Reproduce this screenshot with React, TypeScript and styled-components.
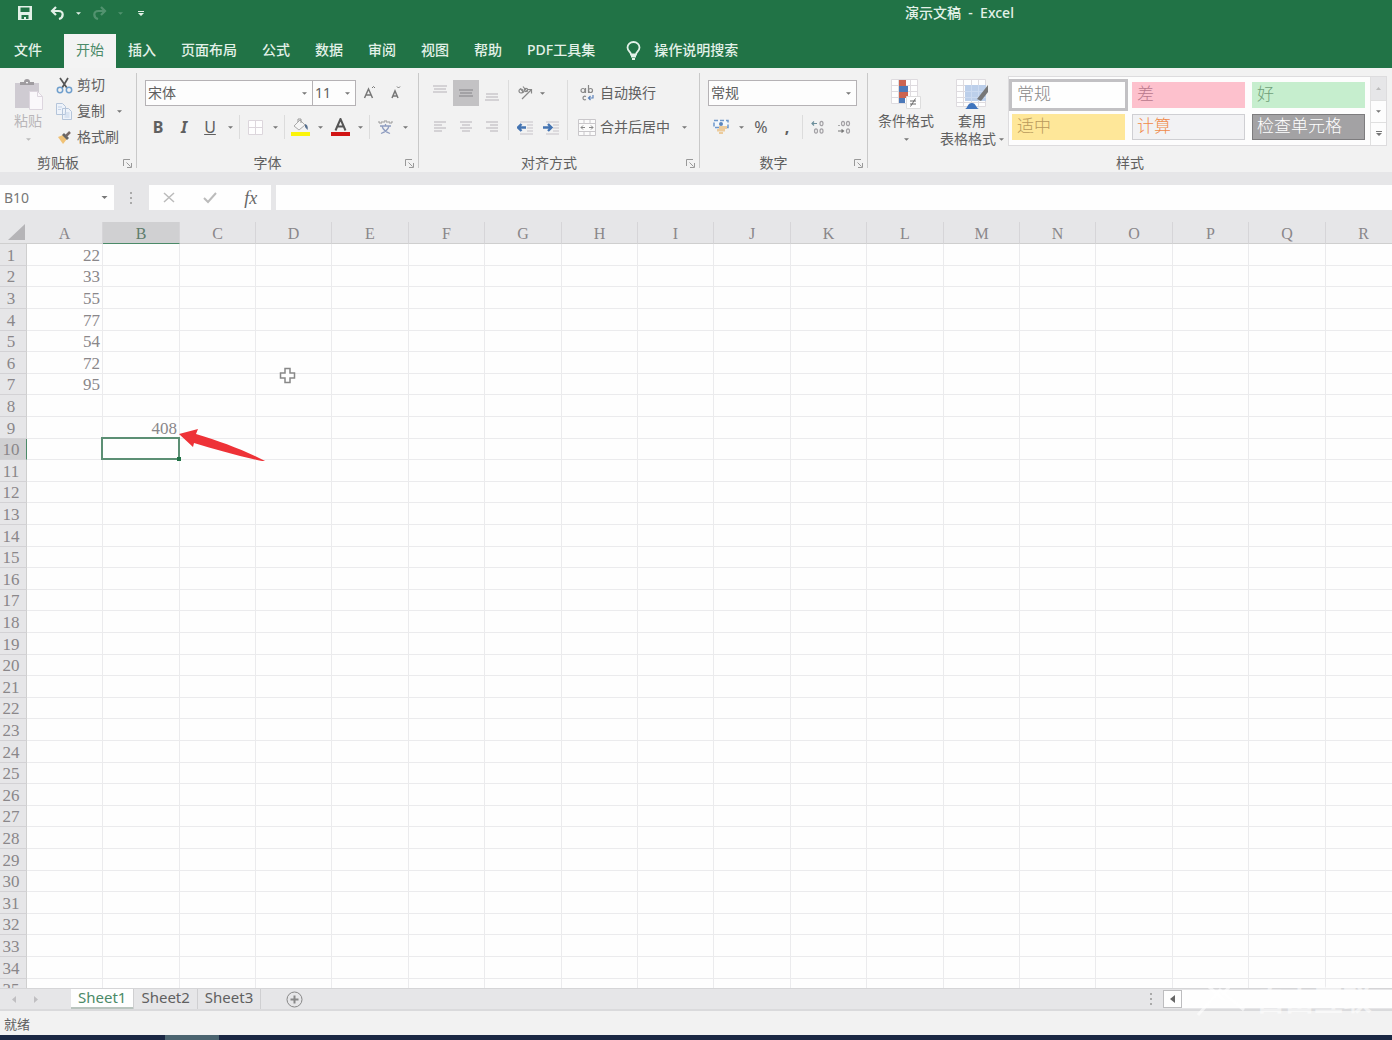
import React from 'react';
import styled, { createGlobalStyle, css } from 'styled-components';

const UI = `'Noto Sans', 'Noto Sans CJK SC', sans-serif`;
const SERIF = `'Liberation Serif', 'Noto Sans CJK SC', serif`;

const GlobalStyle = createGlobalStyle`
  *, *::before, *::after { box-sizing: border-box; }
  body { margin: 0; background: #fff; color: #606060; font: 14px/18px ${UI}; }
  button, input, select { font: inherit; color: inherit; margin: 0; padding: 0; border: 0; background: none; border-radius: 0; }
  svg { display: block; flex: none; }
`;

const Window = styled.div`
  display: flex;
  flex-direction: column;
  height: 100vh;
  overflow: hidden;
`;

/* ---------- title bar and tabs ---------- */
const TitleBar = styled.header`
  display: grid;
  grid-template-columns: 1fr auto 1fr;
  align-items: center;
  height: 34px;
  padding-bottom: 8px;
  background: #217346;
  color: #e3f1e8;
`;
const QuickAccess = styled.div`
  display: flex;
  align-items: center;
  padding-left: 10px;
`;
const QuickButton = styled.button<{ $w: number; $dim?: boolean }>`
  display: grid;
  place-items: center;
  width: ${p => p.$w}px;
  height: 24px;
  opacity: ${p => (p.$dim ? 0.25 : 1)};
`;
const Title = styled.h1`
  margin: 0;
  padding-left: 527px;
  grid-column: 2;
  font-size: 14px;
  line-height: 18px;
  font-weight: 500;
  white-space: pre;
`;
const TabBar = styled.nav`
  display: flex;
  height: 34px;
  padding-left: 2px;
  background: #217346;
`;
const Tab = styled.button<{ $active?: boolean; $search?: boolean }>`
  display: flex;
  align-items: center;
  gap: 13px;
  padding: 0 13px 2px 12px;
  padding-left: ${p => (p.$search ? 18 : 12)}px;
  font-weight: 500;
  color: #e3f1e8;
  ${p => p.$active && css`
    margin-left: 9px;
    padding: 0 12px 2px;
    font-weight: 400;
    background: #f3f3f3;
    color: #4b8a68;
  `}
`;

/* ---------- ribbon ---------- */
const Ribbon = styled.section`
  display: flex;
  height: 104px;
  background: #f2f2f2;
`;
const Group = styled.div<{ $w?: number }>`
  display: flex;
  flex-direction: column;
  ${p => (p.$w ? `flex: none; width: ${p.$w}px;` : 'flex: 1; min-width: 0;')}
`;
const GroupRule = styled.div`
  flex: none;
  width: 1px;
  margin: 5px 0 4px;
  background: #c9c9c9;
`;
const GroupBody = styled.div<{ $top?: number }>`
  flex: 1;
  display: flex;
  align-items: flex-start;
  padding: ${p => p.$top ?? 12}px 0 0 8px;
`;
const GroupFoot = styled.div`
  display: grid;
  grid-template-columns: 1fr auto;
  align-items: center;
  justify-items: center;
  height: 18px;
`;
const Launcher = styled.button`
  display: grid;
  place-items: center;
  width: 18px;
  height: 18px;
  margin-left: 2px;
`;
const Stack = styled.div<{ $gap?: number; $indent?: number }>`
  display: flex;
  flex-direction: column;
  gap: ${p => p.$gap ?? 8}px;
  padding-left: ${p => p.$indent ?? 0}px;
`;
const Line = styled.div`
  display: flex;
  align-items: center;
  height: 26px;
`;
const Tool = styled.button<{ $w?: number; $on?: boolean }>`
  display: grid;
  place-items: center;
  flex: none;
  width: ${p => p.$w ?? 26}px;
  height: 26px;
  font-size: 16px;
  background: ${p => (p.$on ? '#c3c2c4' : 'transparent')};
`;
const WideTool = styled.button`
  display: flex;
  align-items: center;
  gap: 4px;
  height: 26px;
  padding-left: 5px;
  white-space: nowrap;
`;
const BigTool = styled.button<{ $w: number; $dim?: boolean }>`
  display: flex;
  flex-direction: column;
  align-items: center;
  flex: none;
  width: ${p => p.$w}px;
  padding-top: ${p => (p.$dim ? 4 : 0)}px;
  color: ${p => (p.$dim ? '#b9b6b9' : 'inherit')};
  white-space: nowrap;
`;
const BigIcon = styled.span`
  display: grid;
  place-items: center;
  height: 36px;
`;
const BigLine = styled.span`
  display: flex;
  align-items: center;
  gap: 3px;
  height: 18px;
`;
const Rule = styled.div<{ $tall?: boolean }>`
  flex: none;
  width: 1px;
  height: ${p => (p.$tall ? 60 : 24)}px;
  margin: 0 ${p => (p.$tall ? 3 : 2)}px;
  background: #dcdcdc;
`;
const SelectBox = styled.label<{ $w: number }>`
  display: grid;
  grid-template-columns: 1fr 16px;
  align-items: center;
  width: ${p => p.$w}px;
  height: 26px;
  border: 1px solid #b5b2b5;
  background: #fdfdfd;
  & + & { border-left: 0; }
  select {
    grid-area: 1 / 1 / 2 / 3;
    appearance: none;
    height: 24px;
    padding-left: 2px;
    outline: 0;
  }
  svg { grid-area: 1 / 2; justify-self: center; pointer-events: none; }
`;

/* ---------- style gallery ---------- */
const Gallery = styled.div`
  display: flex;
  height: 70px;
  border: 1px solid #dddcde;
  background: #fdfdfd;
`;
const Swatches = styled.div`
  display: grid;
  grid-template-columns: repeat(3, 113px);
  grid-auto-rows: 26px;
  gap: 6px 7px;
  padding: 5px 5px 5px 3px;
`;
const Swatch = styled.button<{ $bg: string; $fg: string; $edge?: string; $picked?: boolean }>`
  padding: 0 4px 1px;
  border: 1px solid ${p => p.$edge ?? p.$bg};
  background: ${p => p.$bg};
  color: ${p => p.$fg};
  font: 300 17px/22px ${SERIF};
  text-align: left;
  ${p => p.$picked && css`box-shadow: 0 0 0 3px #c2c1c4;`}
`;
const GalleryNav = styled.div`
  display: grid;
  grid-template-rows: 1fr 1fr 1fr;
  width: 16px;
  border-left: 1px solid #e0e0e0;
`;
const NavButton = styled.button<{ $off?: boolean }>`
  display: grid;
  place-items: center;
  background: ${p => (p.$off ? '#e6e6e8' : 'transparent')};
  & + & { border-top: 1px solid #e0e0e0; }
`;

/* ---------- formula bar ---------- */
const FormulaBar = styled.div`
  display: flex;
  flex: none;
  align-items: flex-start;
  height: 50px;
  padding-top: 13px;
  background: #e6e6e8;
`;
const NameBox = styled.label`
  display: flex;
  align-items: center;
  width: 114px;
  height: 25px;
  padding-right: 6px;
  background: #fefefe;
  input { flex: 1; min-width: 0; padding-left: 4px; color: #777; }
`;
const Grip = styled.div`
  display: grid;
  place-items: center;
  width: 35px;
  height: 25px;
`;
const FormulaTools = styled.div`
  display: flex;
  width: 122px;
  height: 25px;
  margin-right: 5px;
  background: #fefefe;
`;
const FormulaTool = styled.button`
  display: grid;
  place-items: center;
  flex: 1;
  font: italic 18px/20px ${SERIF};
  color: #666;
`;
const FormulaInput = styled.input`
  flex: 1;
  min-width: 0;
  height: 25px;
  padding-left: 6px;
  background: #fefefe;
`;

/* ---------- sheet ---------- */
const SheetArea = styled.main`
  position: relative;
  flex: 1;
  min-height: 0;
  overflow: hidden;
  background: #fefefe;
`;
const Grid = styled.table`
  table-layout: fixed;
  width: 0;
  border-collapse: separate;
  border-spacing: 0;
  color: #8a878a;
  font: 17px/18px ${SERIF};
`;
const Col = styled.col<{ $w: number }>`
  width: ${p => p.$w}px;
`;
const Corner = styled.td`
  padding: 0 2px 1px 0;
  border-bottom: 1px solid #cfcfcf;
  background: #e6e6e8;
  svg { margin-left: auto; }
`;
const ColHead = styled.th<{ $on?: boolean }>`
  height: 22px;
  padding: 3px 0 0;
  border-right: 1px solid #d6d5d8;
  border-bottom: 1px solid #cfcfcf;
  background: #e6e6e8;
  font-size: 16px;
  font-weight: 400;
  ${p => p.$on && css`background: #d0d0d2; color: #5f7d6c; border-bottom-color: #4b8a68;`}
`;
const Row = styled.tr`
  height: 22px;
  &:nth-child(5n + 2), &:nth-child(5n + 5) { height: 21px; }
`;
const RowHead = styled.th<{ $on?: boolean }>`
  padding: 2px 4px 0 0;
  border-right: 1px solid #cfcfcf;
  border-bottom: 1px solid #d3d2d5;
  background: #e6e6e8;
  font-weight: 400;
  ${p => p.$on && css`background: #d0d0d2; border-right-color: #4b8a68;`}
`;
const Cell = styled.td<{ $on?: boolean }>`
  padding: 2px 2px 0 0;
  border-right: 1px solid #ebebed;
  border-bottom: 1px solid #ebebed;
  text-align: right;
  ${p => p.$on && css`
    position: relative;
    &::before { content: ''; position: absolute; inset: -2px -1px -1px -2px; border: 2px solid #5c8f74; }
    &::after { content: ''; position: absolute; right: -2px; bottom: -2px; width: 4px; height: 4px; background: #217346; }
  `}
`;
const Pin = styled.svg<{ $x: number; $y: number }>`
  position: absolute;
  left: ${p => p.$x}px;
  top: ${p => p.$y}px;
  pointer-events: none;
`;

/* ---------- bottom bars ---------- */
const SheetTabs = styled.div`
  display: flex;
  flex: none;
  align-items: flex-start;
  height: 23px;
  padding-left: 3px;
  border-top: 1px solid #d5d5d7;
  border-bottom: 2px solid #dadadc;
  background: #e6e6e8;
`;
const SheetNav = styled.button`
  display: grid;
  place-items: center;
  width: 22px;
  height: 20px;
`;
const SheetList = styled.div`
  display: flex;
  margin-left: 24px;
`;
const SheetTab = styled.button<{ $on?: boolean }>`
  height: 20px;
  padding: 0 7px 3px;
  border-right: 1px solid #cfcfd1;
  font-size: 15px;
  line-height: 17px;
  ${p => p.$on && css`background: #fefefe; color: #4b8a68; box-shadow: inset 0 -2px #b9c4be;`}
`;
const AddSheet = styled.button`
  display: grid;
  place-items: center;
  width: 66px;
  height: 20px;
`;
const ScrollZone = styled.div`
  display: flex;
  align-items: center;
  width: 242px;
  height: 20px;
  margin-left: auto;
`;
const ScrollButton = styled.button`
  display: grid;
  place-items: center;
  width: 19px;
  height: 18px;
  margin-left: 10px;
  border: 1px solid #bdbdbf;
  background: #fefefe;
`;
const ScrollThumb = styled.div`
  flex: 1;
  height: 18px;
  background: #fefefe;
`;
const StatusBar = styled.footer`
  flex: none;
  height: 24px;
  padding: 4px 4px 0;
  background: #f2f2f2;
  font-size: 13px;
`;
const Taskbar = styled.div`
  display: flex;
  flex: none;
  height: 5px;
  padding-left: 165px;
  background: #1b2844;
`;
const TaskItem = styled.div`
  width: 54px;
  background: #4b6470;
`;
const Watermark = styled.div`
  position: absolute;
  right: 20px;
  bottom: 22px;
  display: flex;
  align-items: center;
  gap: 10px;
  color: rgba(255, 255, 255, 0.6);
  font-size: 29px;
  line-height: 34px;
  font-weight: 700;
  pointer-events: none;
`;

/* ---------- icons ---------- */
const Caret = ({ color = '#777', s = 5 }: { color?: string; s?: number }) => (
  <svg width={s} height="3" viewBox="0 0 6 3" fill={color}><path d="M0 0h6L3 3z" /></svg>
);
const SplitCaret = ({ label, w = 14 }: { label: string; w?: number }) => (
  <Tool $w={w} aria-label={label}><Caret /></Tool>
);
const LaunchIcon = () => (
  <svg width="9" height="9" fill="none" stroke="#999"><path d="M.5 7V.5H7M3.500 3.500l4 4M8.500 4v4.500H4" /></svg>
);
const SaveIcon = () => (
  <svg width="14" height="14"><path fill="#e3f1e8" fillRule="evenodd" d="M0 0h14v14H0zM2.500 1.500v4.500h9V1.500zM3.500 9v4H6v-2h2v2h2.500V9z" /></svg>
);
const UndoIcon = ({ flip }: { flip?: boolean }) => (
  <svg width="15" height="14" viewBox="0 0 15 14" fill="none" stroke="#e3f1e8" strokeWidth="2.200">
    <g transform={flip ? 'matrix(-1 0 0 1 15 0)' : undefined}><path d="M6 1L2 5l4 4M2 5h6.500c5.500 0 5.500 6.500 .500 8" /></g>
  </svg>
);
const BulbIcon = () => (
  <svg width="15" height="19" viewBox="0 0 15 19" fill="none" stroke="#e3f1e8" strokeWidth="1.800">
    <path d="M5 13.500c0-2.500-3.500-3.500-3.500-7a6 5.500 0 0 1 12 0c0 3.500-3.500 4.500-3.500 7zM5 15.500h5M6 18h3" />
  </svg>
);
const PasteIcon = () => (
  <svg width="29" height="31" viewBox="0 0 29 31">
    <path fill="#cfcbd2" d="M1 4h24v25H1z" /><path fill="#9f9ca0" fillRule="evenodd" d="M6 6V3h4a3 3 0 0 1 6 0h4v3zM12 3h2v1.500h-2z" />
    <path fill="#faf8fb" stroke="#ddd6df" d="M15.500 12.500h8l5 5v13h-13z" /><path fill="none" stroke="#ddd6df" d="M23.500 12.500v5h5" />
  </svg>
);
const CutIcon = () => (
  <svg width="17" height="17" viewBox="0 0 17 17" fill="none">
    <path stroke="#555" strokeWidth="1.700" d="M4 1l7 10M12 1L6 11" />
    <circle cx="4" cy="13" r="2.700" stroke="#6f9fcd" strokeWidth="1.500" /><circle cx="13" cy="13" r="2.700" stroke="#6f9fcd" strokeWidth="1.500" />
  </svg>
);
const CopyIcon = () => (
  <svg width="17" height="17" viewBox="0 0 17 17" fill="#eef3fa" stroke="#b5c5da">
    <path d="M.5.5h6l3 3v8h-9zM6.500 5.500h6l3 3v8h-9z" /><path d="M2 4h4M2 6.500h3M8.500 10h5M8.500 12h5M8.500 14h5" stroke="#c3d3e8" />
  </svg>
);
const BrushIcon = () => (
  <svg width="17" height="17" viewBox="0 0 17 17">
    <path fill="#f0c277" d="M2 8l5-2 4 4-4 5z" /><path fill="#666" d="M6 6l2-2 5 5-2 2z" /><path stroke="#776a66" strokeWidth="2.500" d="M10 7l4-4" />
  </svg>
);
const GrowIcon = ({ small }: { small?: boolean }) => (
  <svg width="14" height="15" viewBox="0 0 14 15" fill="none" stroke="#777" strokeWidth="1.500">
    <path d={small ? 'M4 12l3-7 3 7M5 10h4' : 'M2.500 12L6.500 3l4 9M4 9h5'} />
    <path strokeWidth="1" d={small ? 'M9 .5L10.500 2 12 .5' : 'M10 2L11.500.5 13 2'} />
  </svg>
);
const BorderIcon = () => (
  <svg width="15" height="15" fill="#fefefe" stroke="#dcd6dc"><path d="M.5.5h14v14H.5zM7.500 1v13M1 7.500h13" /></svg>
);
const FillIcon = () => (
  <svg width="19" height="18" viewBox="0 0 19 18">
    <path fill="#f5f5f5" stroke="#aaa" d="M3 8l6-6 5 5-6 5z" /><path stroke="#999" fill="none" d="M7 4V1h3v4" />
    <path fill="#556f8f" d="M14 6c3 1 3 4 2.500 6L14 9z" /><path fill="#fbf40a" d="M0 14h19v4H0z" />
  </svg>
);
const FontColorIcon = () => (
  <svg width="19" height="18" viewBox="0 0 19 18">
    <path fill="none" stroke="#555" strokeWidth="2" d="M4.500 12.500l5-11.500 5 11.500M6.500 8.500h6" /><path fill="#d11515" d="M0 14h19v4H0z" />
  </svg>
);
const PhoneticIcon = () => (
  <svg width="15" height="16" viewBox="0 0 15 16" fill="none">
    <path stroke="#999" d="M1 4V2M1 4h3V2M6 4V2h3v2M11 2v2h3V2" /><path stroke="#8f9dc0" strokeWidth="1.300" d="M2 7h11M7.500 5v2M4 7c1 4 4 6 8 7.500M11 7c-1 4-4 6-8 7.500" />
  </svg>
);
const Bars = ({ rows, dark }: { rows: [number, number, number][]; dark?: boolean }) => (
  <svg width="14" height="16" fill={dark ? '#a3a2a5' : '#d4d2d5'}>
    {rows.map(([x, y, w]) => <rect key={y} x={x} y={y} width={w} height="2" />)}
  </svg>
);
const OrientIcon = () => (
  <svg width="16" height="16" viewBox="0 0 16 16" fill="none" stroke="#888" strokeWidth="1.200">
    <path d="M5 14l9-9M10.500 4.500H14.500V8.500" /><circle cx="4" cy="6" r="2" /><path d="M3 3.500l4 4M6 1.500l4 5" /><circle cx="9" cy="5" r="1.700" />
  </svg>
);
const IndentIcon = ({ right }: { right?: boolean }) => (
  <svg width="17" height="15" viewBox="0 0 17 15">
    <path fill="#dcdadd" d="M3 1h13v2H3zM10 4h6v2h-6zM10 7h6v2h-6zM10 10h6v2h-6zM3 13h13v2H3z" />
    <path fill="none" stroke="#4474b2" strokeWidth="2.400" d={right ? 'M0 7.500h8M5 4l3.500 3.500L5 11' : 'M9 7.500H1M4.500 4L1 7.500 4.500 11'} />
  </svg>
);
const WrapIcon = () => (
  <svg width="18" height="17" viewBox="0 0 18 17" fill="none" stroke="#888" strokeWidth="1.200">
    <circle cx="5" cy="5.500" r="2" /><path d="M7.500 3v5M10.500 0v8" /><circle cx="12.500" cy="5.500" r="2" />
    <path d="M8 11.500c-4-2-4 5 0 3" /><path stroke="#5b82ba" d="M15 10v3h-4M12.500 11l-2 2 2 2" />
  </svg>
);
const MergeIcon = () => (
  <svg width="18" height="17" viewBox="0 0 18 17" fill="none" stroke="#c9c7ca">
    <path fill="#fbfbfb" d="M.5.5h17v16H.5zM.5 4.500h17M.5 12.500h17M6 .5v4M12 .5v4M6 12.500v4M12 12.500v4" /><path stroke="#888" d="M3 8.500h4M11 8.500h4M5 6.500l-2 2 2 2M13 6.500l2 2-2 2" />
  </svg>
);
const MoneyIcon = () => (
  <svg width="17" height="16" viewBox="0 0 17 16">
    <path fill="#f4f8fc" stroke="#6f98cb" strokeWidth="1.500" strokeDasharray="4 2" d="M1 1.500h14v7H1z" /><circle cx="8" cy="5" r="2" fill="#5b86bd" />
    <path fill="#eccb9c" d="M6 7h8v3H6zM4 10h8v2.500H4zM6 13h4v2H6z" />
  </svg>
);
const DecimalIcon = ({ less }: { less?: boolean }) => (
  <svg width="14" height="15" viewBox="0 0 14 15" fill="none" stroke="#a3a1a5" strokeWidth="1.200">
    {less ? (
      <><ellipse cx="6" cy="3.500" rx="1.500" ry="2.200" /><ellipse cx="11" cy="3.500" rx="1.500" ry="2.200" /><ellipse cx="11" cy="11" rx="1.500" ry="2.200" /><path stroke="#777" d="M1 11h6M4.500 9.500L6.500 11l-2 1.500M2 5v1" /></>
    ) : (
      <><path stroke="#6d8f9c" d="M1 3.500h5M3 1.500L1 3.500l2 2" /><ellipse cx="10.500" cy="3.500" rx="1.500" ry="2.200" /><ellipse cx="5" cy="11" rx="1.500" ry="2.200" /><ellipse cx="10.500" cy="11" rx="1.500" ry="2.200" /></>
    )}
  </svg>
);
const ConditionalIcon = () => (
  <svg width="30" height="30" viewBox="0 0 30 30">
    <path fill="#fefefe" stroke="#dedbdf" d="M.5.5h26v24H.5zM.5 6.500h26M.5 12.500h26M.5 18.500h26M7.500.5v24M19.500.5v24" />
    <path fill="#cc6450" d="M8 1h7v6H8zM8 13h9v6H8z" /><path fill="#4c79b8" d="M8 7h9v6H8zM8 19h6v5H8z" />
    <path fill="#fefefe" stroke="#ddd" d="M15.500 17.500h14v12h-14z" /><path fill="none" stroke="#666" d="M19 22h6M19 25h6M24.500 19.500l-5 8" />
  </svg>
);
const TableFormatIcon = () => (
  <svg width="32" height="30" viewBox="0 0 32 30">
    <path fill="#fefefe" stroke="#dedbdf" d="M.5.5h29v27H.5zM.5 6.500h29M.5 12.500h29M.5 18.500h29M.5 23.500h29M7.500.5v27M15.500.5v27M22.500.5v27" />
    <path fill="#bccfea" d="M9 6h21v16H9z" /><path stroke="#cbdaf0" d="M9 12.500h21M9 18.500h21M15.500 6v16M22.500 6v16" />
    <path fill="#777" d="M32 6v7l-7 9-4-2z" /><path fill="#3f74bd" d="M9 30c3-1 2-6 7-6 4 0 4 5 7 6z" />
  </svg>
);
const Dots = () => (
  <svg width="3" height="14" fill="#aaa"><path d="M0 1h2v2H0zM0 6h2v2H0zM0 11h2v2H0z" /></svg>
);

/* ---------- data ---------- */
const TABS = ['文件', '开始', '插入', '页面布局', '公式', '数据', '审阅', '视图', '帮助', 'PDF工具集'];
const COLUMNS = 'ABCDEFGHIJKLMNOPQR'.split('');
const COL_PATTERN = [76, 77, 76, 76, 77];
const VALUES: Record<string, string> = { A1: '22', A2: '33', A3: '55', A4: '77', A5: '54', A6: '72', A7: '95', B9: '408' };
const STYLES = [
  { name: '常规', bg: '#fefefe', fg: '#888', picked: true },
  { name: '差', bg: '#fdc1cd', fg: '#b9788c' },
  { name: '好', bg: '#c6eece', fg: '#6f9f78' },
  { name: '适中', bg: '#fee799', fg: '#b99a5c' },
  { name: '计算', bg: '#f2f2f4', fg: '#f08a4a', edge: '#cfcfd3' },
  { name: '检查单元格', bg: '#a3a2a4', fg: '#fff', edge: '#7d7c7e' },
];
const ALIGN_TOP: [number, number, number][] = [[0, 0, 14], [1, 3, 12], [0, 6, 14]];
const ALIGN_MID: [number, number, number][] = [[0, 4, 14], [1, 7, 12], [0, 10, 14]];
const ALIGN_BOTTOM: [number, number, number][] = [[1, 8, 12], [1, 11, 12], [0, 14, 14]];
const LEFT: [number, number, number][] = [[1, 2, 12], [1, 5, 8], [1, 8, 12], [1, 11, 8]];
const CENTER: [number, number, number][] = [[1, 2, 12], [3, 5, 8], [1, 8, 12], [3, 11, 8]];
const RIGHT: [number, number, number][] = [[1, 2, 12], [5, 5, 8], [1, 8, 12], [5, 11, 8]];

const Foot = ({ name, launcher = true }: { name: string; launcher?: boolean }) => (
  <GroupFoot>
    <span>{name}</span>
    {launcher && <Launcher aria-label={name}><LaunchIcon /></Launcher>}
  </GroupFoot>
);

const Picker = ({ label, value, w }: { label: string; value: string; w: number }) => (
  <SelectBox $w={w}>
    <select aria-label={label} defaultValue={value}><option>{value}</option></select>
    <Caret />
  </SelectBox>
);

export default function App() {
  return (
    <Window>
      <GlobalStyle />
      <TitleBar>
        <QuickAccess>
          <QuickButton $w={30} aria-label="保存"><SaveIcon /></QuickButton>
          <QuickButton $w={35} aria-label="撤销"><UndoIcon /></QuickButton>
          <QuickButton $w={6} aria-label="撤销列表"><Caret color="#e3f1e8" /></QuickButton>
          <QuickButton $w={36} $dim aria-label="恢复"><UndoIcon flip /></QuickButton>
          <QuickButton $w={6} $dim aria-label="恢复列表"><Caret color="#e3f1e8" /></QuickButton>
          <QuickButton $w={36} aria-label="自定义快速访问工具栏">
            <svg width="6" height="6" fill="#e3f1e8"><path d="M0 1h6v1H0zM0 3h6L3 6z" /></svg>
          </QuickButton>
        </QuickAccess>
        <Title>演示文稿  -  Excel</Title>
      </TitleBar>
      <TabBar>
        {TABS.map(t => <Tab key={t} $active={t === '开始'}>{t}</Tab>)}
        <Tab $search><BulbIcon />操作说明搜索</Tab>
      </TabBar>

      <Ribbon>
        <Group $w={136}>
          <GroupBody $top={4}>
            <BigTool $w={40} $dim>
              <BigIcon><PasteIcon /></BigIcon>
              <BigLine>粘贴</BigLine>
              <BigLine><Caret color="#bbb" /></BigLine>
            </BigTool>
            <Stack $gap={0} $indent={3}>
              <Line><WideTool><CutIcon />剪切</WideTool></Line>
              <Line><WideTool><CopyIcon />复制</WideTool><SplitCaret label="复制选项" w={28} /></Line>
              <Line><WideTool><BrushIcon />格式刷</WideTool></Line>
            </Stack>
          </GroupBody>
          <Foot name="剪贴板" />
        </Group>
        <GroupRule />
        <Group $w={281}>
          <GroupBody>
            <Stack>
              <Line>
                <Picker label="字体" value="宋体" w={168} />
                <Picker label="字号" value="11" w={43} />
                <Tool aria-label="增大字号"><GrowIcon /></Tool>
                <Tool aria-label="减小字号"><GrowIcon small /></Tool>
              </Line>
              <Line>
                <Tool><b>B</b></Tool>
                <Tool><b><i>I</i></b></Tool>
                <Tool><u>U</u></Tool>
                <SplitCaret label="下划线选项" />
                <Rule />
                <Tool aria-label="边框"><BorderIcon /></Tool>
                <SplitCaret label="边框选项" />
                <Rule />
                <Tool aria-label="填充颜色"><FillIcon /></Tool>
                <SplitCaret label="填充颜色选项" />
                <Tool aria-label="字体颜色"><FontColorIcon /></Tool>
                <SplitCaret label="字体颜色选项" />
                <Rule />
                <Tool aria-label="拼音"><PhoneticIcon /></Tool>
                <SplitCaret label="拼音选项" />
              </Line>
            </Stack>
          </GroupBody>
          <Foot name="字体" />
        </Group>
        <GroupRule />
        <Group $w={280}>
          <GroupBody>
            <Stack>
              <Line>
                <Tool aria-label="顶端对齐"><Bars rows={ALIGN_TOP} /></Tool>
                <Tool $on aria-label="垂直居中"><Bars rows={ALIGN_MID} dark /></Tool>
                <Tool aria-label="底端对齐"><Bars rows={ALIGN_BOTTOM} /></Tool>
              </Line>
              <Line>
                <Tool aria-label="左对齐"><Bars rows={LEFT} /></Tool>
                <Tool aria-label="居中"><Bars rows={CENTER} /></Tool>
                <Tool aria-label="右对齐"><Bars rows={RIGHT} /></Tool>
              </Line>
            </Stack>
            <Rule $tall />
            <Stack>
              <Line>
                <Tool aria-label="方向"><OrientIcon /></Tool>
                <SplitCaret label="方向选项" w={8} />
              </Line>
              <Line>
                <Tool aria-label="减少缩进量"><IndentIcon /></Tool>
                <Tool aria-label="增加缩进量"><IndentIcon right /></Tool>
              </Line>
            </Stack>
            <Rule $tall />
            <Stack $indent={2}>
              <Line><WideTool><WrapIcon />自动换行</WideTool></Line>
              <Line><WideTool><MergeIcon />合并后居中</WideTool><SplitCaret label="合并选项" w={28} /></Line>
            </Stack>
          </GroupBody>
          <Foot name="对齐方式" />
        </Group>
        <GroupRule />
        <Group $w={167}>
          <GroupBody>
            <Stack>
              <Line><Picker label="数字格式" value="常规" w={149} /></Line>
              <Line>
                <Tool aria-label="会计数字格式"><MoneyIcon /></Tool>
                <SplitCaret label="会计格式选项" />
                <Tool>%</Tool>
                <Tool><b>,</b></Tool>
                <Rule />
                <Tool aria-label="增加小数位数"><DecimalIcon /></Tool>
                <Tool aria-label="减少小数位数"><DecimalIcon less /></Tool>
              </Line>
            </Stack>
          </GroupBody>
          <Foot name="数字" />
        </Group>
        <GroupRule />
        <Group>
          <GroupBody $top={8}>
            <BigTool $w={60}>
              <BigIcon><ConditionalIcon /></BigIcon>
              <BigLine>条件格式</BigLine>
              <BigLine><Caret /></BigLine>
            </BigTool>
            <BigTool $w={72}>
              <BigIcon><TableFormatIcon /></BigIcon>
              <BigLine>套用</BigLine>
              <BigLine>表格格式<Caret /></BigLine>
            </BigTool>
            <Gallery>
              <Swatches>
                {STYLES.map(s => (
                  <Swatch key={s.name} $bg={s.bg} $fg={s.fg} $edge={s.edge} $picked={s.picked}>{s.name}</Swatch>
                ))}
              </Swatches>
              <GalleryNav>
                <NavButton $off aria-label="上一行"><svg width="5" height="3" fill="#bbb"><path d="M0 3h5L2.500 0z" /></svg></NavButton>
                <NavButton aria-label="下一行"><Caret /></NavButton>
                <NavButton aria-label="其他"><svg width="6" height="6" fill="#777"><path d="M0 0h6v1H0zM0 2h6L3 5z" /></svg></NavButton>
              </GalleryNav>
            </Gallery>
          </GroupBody>
          <Foot name="样式" launcher={false} />
        </Group>
      </Ribbon>

      <FormulaBar>
        <NameBox>
          <input aria-label="名称框" defaultValue="B10" />
          <Caret s={7} />
        </NameBox>
        <Grip><Dots /></Grip>
        <FormulaTools>
          <FormulaTool aria-label="取消"><svg width="12" height="11" stroke="#bbb" strokeWidth="1.500"><path d="M1 1l10 9M11 1L1 10" /></svg></FormulaTool>
          <FormulaTool aria-label="输入"><svg width="14" height="12" fill="none" stroke="#bbb" strokeWidth="2"><path d="M1 6l4 4 8-9" /></svg></FormulaTool>
          <FormulaTool>fx</FormulaTool>
        </FormulaTools>
        <FormulaInput aria-label="编辑栏" />
      </FormulaBar>

      <SheetArea>
        <Grid>
          <colgroup>
            <Col $w={27} />
            {COLUMNS.map((c, i) => <Col key={c} $w={COL_PATTERN[i % 5]} />)}
          </colgroup>
          <thead>
            <tr>
              <Corner><svg width="17" height="16" fill="#b5b4b7"><path d="M17 0v16H0z" /></svg></Corner>
              {COLUMNS.map(c => <ColHead key={c} $on={c === 'B'}>{c}</ColHead>)}
            </tr>
          </thead>
          <tbody>
            {Array.from({ length: 35 }, (_, r) => r + 1).map(r => (
              <Row key={r}>
                <RowHead $on={r === 10}>{r}</RowHead>
                {COLUMNS.map(c => <Cell key={c} $on={c + r === 'B10'}>{VALUES[c + r]}</Cell>)}
              </Row>
            ))}
          </tbody>
        </Grid>
        <Pin $x={279} $y={145} width="17" height="17" fill="#fefefe" stroke="#888" strokeWidth="1.500">
          <path d="M6 1.500h5v4.500h4.500v5H11v4.500H6V11H1.500V6H6z" />
        </Pin>
        <Pin $x={178} $y={203} width="90" height="36" fill="#ee3237">
          <path d="M1 9L20 4l-2 5c26 8 48 16 71 28-25-5-50-12-73-19l-1 4z" />
        </Pin>
      </SheetArea>

      <SheetTabs>
        <SheetNav aria-label="上一张"><svg width="5" height="7" fill="#c0bfc2"><path d="M4 0v7L0 3.500z" /></svg></SheetNav>
        <SheetNav aria-label="下一张"><svg width="5" height="7" fill="#c0bfc2"><path d="M0 0v7l4-3.500z" /></svg></SheetNav>
        <SheetList>
          {['Sheet1', 'Sheet2', 'Sheet3'].map(s => <SheetTab key={s} $on={s === 'Sheet1'}>{s}</SheetTab>)}
        </SheetList>
        <AddSheet aria-label="新工作表">
          <svg width="17" height="17" fill="none" stroke="#888"><circle cx="8.500" cy="8.500" r="7.500" /><path strokeWidth="2" d="M4.500 8.500h8M8.500 4.500v8" /></svg>
        </AddSheet>
        <ScrollZone>
          <Dots />
          <ScrollButton aria-label="向左滚动"><svg width="5" height="8" fill="#666"><path d="M5 0v8L0 4z" /></svg></ScrollButton>
          <ScrollThumb />
        </ScrollZone>
      </SheetTabs>
      <StatusBar>就绪</StatusBar>
      <Taskbar><TaskItem /></Taskbar>
      <Watermark aria-hidden="true">
        <svg width="50" height="36" fill="none" stroke="rgba(255,255,255,.6)" strokeWidth="3"><path d="M2 33L24 8l24 20M12 4l16 14M34 4l-8 9" /></svg>
        自由互联
      </Watermark>
    </Window>
  );
}
